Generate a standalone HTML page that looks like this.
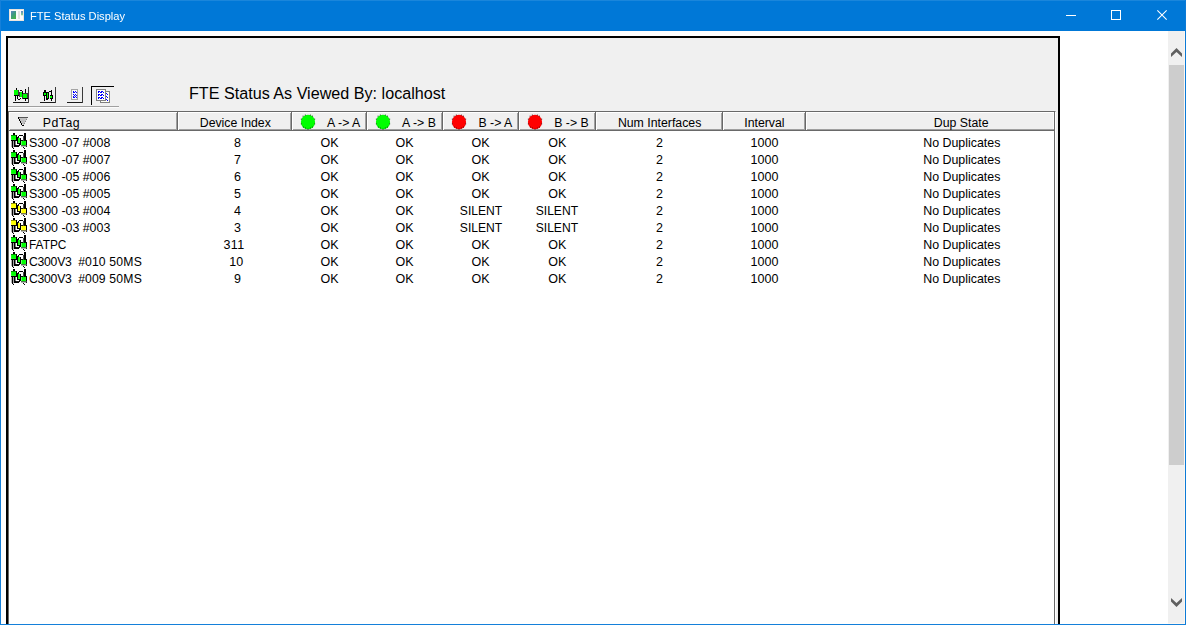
<!DOCTYPE html><html><head><meta charset="utf-8"><title>FTE Status Display</title><style>
*{margin:0;padding:0;box-sizing:border-box}
html,body{width:1186px;height:625px;overflow:hidden;background:#fff}
body{position:relative;font-family:"Liberation Sans",sans-serif;font-size:12px;color:#000}
.abs{position:absolute}
#title{left:0;top:0;width:1186px;height:31px;background:#0078d7}
#ttext{left:30px;top:8px;color:#fff;font-size:11.7px;line-height:15px;white-space:nowrap;transform-origin:0 0;transform:scaleX(0.95)}
#bl{left:0;top:0;width:1px;height:625px;background:#1580da}
#br{left:1185px;top:0;width:1px;height:625px;background:#0c7ad6}
#bb{left:0;top:624px;width:1186px;height:1px;background:#1480da}
#bt{left:0;top:0;width:1186px;height:1px;background:#1a86db}
#cr1{left:1184px;top:31px;width:1px;height:593px;background:#fdf7f1}
#cr2{left:1168px;top:623px;width:17px;height:1px;background:#fdf7f1}
#sb{left:1168px;top:31px;width:16px;height:592px;background:#f0f0f0}
#thumb{left:1169px;top:65px;width:15px;height:400px;background:#cdcdcd}
#frame{left:6px;top:36px;width:1054px;height:600px;border:2px solid #000;background:#f0f0f0}
#list{left:8px;top:111px;width:1048px;height:520px;background:#fff;border-left:1px solid #696969;border-top:1px solid #696969;border-right:1px solid #fff}
#lr{left:1054px;top:111px;width:1px;height:520px;background:#696969}
#hdr{left:9px;top:112px;width:1045px;height:19px;background:#f0f0f0}
.hc{position:absolute;top:112px;height:19px;border-top:1px solid #fff;border-left:1px solid #fff;border-right:1px solid #696969;border-bottom:1px solid #696969;background:#f0f0f0}
.hc i{position:absolute;left:0;top:0;right:0;bottom:0;border-right:1px solid #a0a0a0;border-bottom:1px solid #a0a0a0}
.ht{position:absolute;top:116px;font-size:12.3px;line-height:14px;white-space:nowrap;transform:translateX(-50%)}
.c{position:absolute;font-size:12.5px;line-height:14px;white-space:nowrap;transform:translateX(-50%)}
.n{position:absolute;left:29px;font-size:12.4px;line-height:14px;white-space:nowrap}
.ri{filter:blur(0.42px)}
.dot{position:absolute;width:15px;height:15px;border-radius:50%;top:113.5px}
#h1{left:189px;top:84px;font-size:16.15px;line-height:18px;white-space:nowrap}
</style></head><body>
<div class="abs" id="title"></div>
<div class="abs" id="ttext">FTE Status Display</div>
<div class="abs" id="sb"></div><div class="abs" id="thumb"></div>
<div class="abs" id="frame"></div>
<div class="abs" id="h1">FTE Status As Viewed By: localhost</div>
<div class="abs" id="list"></div><div class="abs" id="lr"></div>
<div class="abs" style="left:9px;top:112px;width:1046px;height:19px;background:#f0f0f0"></div>
<div class="abs" style="left:9px;top:112px;width:1046px;height:1px;background:#fff"></div>
<div class="abs" style="left:9px;top:129px;width:1046px;height:1px;background:#a0a0a0"></div>
<div class="abs" style="left:9px;top:130px;width:1046px;height:1px;background:#696969"></div>
<div class="abs" style="left:9px;top:112px;width:1px;height:18px;background:#fff"></div>
<div class="abs" style="left:176px;top:113px;width:1px;height:17px;background:#a0a0a0"></div>
<div class="abs" style="left:177px;top:112px;width:1px;height:19px;background:#696969"></div>
<div class="abs" style="left:178px;top:112px;width:1px;height:18px;background:#fff"></div>
<div class="abs" style="left:290px;top:113px;width:1px;height:17px;background:#a0a0a0"></div>
<div class="abs" style="left:291px;top:112px;width:1px;height:19px;background:#696969"></div>
<div class="abs" style="left:292px;top:112px;width:1px;height:18px;background:#fff"></div>
<div class="abs" style="left:365px;top:113px;width:1px;height:17px;background:#a0a0a0"></div>
<div class="abs" style="left:366px;top:112px;width:1px;height:19px;background:#696969"></div>
<div class="abs" style="left:367px;top:112px;width:1px;height:18px;background:#fff"></div>
<div class="abs" style="left:441px;top:113px;width:1px;height:17px;background:#a0a0a0"></div>
<div class="abs" style="left:442px;top:112px;width:1px;height:19px;background:#696969"></div>
<div class="abs" style="left:443px;top:112px;width:1px;height:18px;background:#fff"></div>
<div class="abs" style="left:517px;top:113px;width:1px;height:17px;background:#a0a0a0"></div>
<div class="abs" style="left:518px;top:112px;width:1px;height:19px;background:#696969"></div>
<div class="abs" style="left:519px;top:112px;width:1px;height:18px;background:#fff"></div>
<div class="abs" style="left:594px;top:113px;width:1px;height:17px;background:#a0a0a0"></div>
<div class="abs" style="left:595px;top:112px;width:1px;height:19px;background:#696969"></div>
<div class="abs" style="left:596px;top:112px;width:1px;height:18px;background:#fff"></div>
<div class="abs" style="left:721px;top:113px;width:1px;height:17px;background:#a0a0a0"></div>
<div class="abs" style="left:722px;top:112px;width:1px;height:19px;background:#696969"></div>
<div class="abs" style="left:723px;top:112px;width:1px;height:18px;background:#fff"></div>
<div class="abs" style="left:804px;top:113px;width:1px;height:17px;background:#a0a0a0"></div>
<div class="abs" style="left:805px;top:112px;width:1px;height:19px;background:#696969"></div>
<div class="abs" style="left:806px;top:112px;width:1px;height:18px;background:#fff"></div>
<div class="abs" style="left:1053px;top:113px;width:1px;height:16px;background:#f9f9f9"></div>
<div class="abs" style="left:1054px;top:112px;width:1px;height:19px;background:#696969"></div>
<div class="ht" style="left:61.4px"><span style="letter-spacing:0.5px">PdTag</span></div>
<div class="ht" style="left:235.3px">Device Index</div>
<div class="ht" style="left:343.7px">A -&gt; A</div>
<div class="ht" style="left:419px">A -&gt; B</div>
<div class="ht" style="left:495.4px">B -&gt; A</div>
<div class="ht" style="left:571.5px">B -&gt; B</div>
<div class="ht" style="left:659.6px">Num Interfaces</div>
<div class="ht" style="left:764.4px">Interval</div>
<div class="ht" style="left:961.2px">Dup State</div>
<svg class="abs" style="left:299.05px;top:112.8px;" width="18" height="18" viewBox="0 0 18 18"><ellipse cx="9" cy="9" rx="7.1" ry="7.3" fill="#00ff00"/><rect x="3.55" y="2.65" width="1" height="1" fill="#063c06" opacity="0.85"/><rect x="5.85" y="1.55" width="1" height="1" fill="#063c06" opacity="0.85"/><rect x="10.85" y="1.55" width="1" height="1" fill="#063c06" opacity="0.85"/><rect x="12.95" y="2.65" width="1" height="1" fill="#063c06" opacity="0.85"/><rect x="1.85" y="5.65" width="1" height="1" fill="#063c06" opacity="0.85"/><rect x="15.15" y="5.65" width="1" height="1" fill="#063c06" opacity="0.85"/><rect x="1.85" y="10.35" width="1" height="1" fill="#063c06" opacity="0.85"/><rect x="15.15" y="10.35" width="1" height="1" fill="#063c06" opacity="0.85"/><rect x="3.85" y="13.55" width="1" height="1" fill="#063c06" opacity="0.85"/><rect x="12.95" y="13.55" width="1" height="1" fill="#063c06" opacity="0.85"/><rect x="5.95" y="14.55" width="1" height="1" fill="#063c06" opacity="0.85"/><rect x="10.85" y="14.55" width="1" height="1" fill="#063c06" opacity="0.85"/><rect x="8.50" y="15.65" width="1" height="1" fill="#063c06" opacity="0.85"/></svg>
<svg class="abs" style="left:374.0px;top:112.8px;" width="18" height="18" viewBox="0 0 18 18"><ellipse cx="9" cy="9" rx="7.1" ry="7.3" fill="#00ff00"/><rect x="3.55" y="2.65" width="1" height="1" fill="#063c06" opacity="0.85"/><rect x="5.85" y="1.55" width="1" height="1" fill="#063c06" opacity="0.85"/><rect x="10.85" y="1.55" width="1" height="1" fill="#063c06" opacity="0.85"/><rect x="12.95" y="2.65" width="1" height="1" fill="#063c06" opacity="0.85"/><rect x="1.85" y="5.65" width="1" height="1" fill="#063c06" opacity="0.85"/><rect x="15.15" y="5.65" width="1" height="1" fill="#063c06" opacity="0.85"/><rect x="1.85" y="10.35" width="1" height="1" fill="#063c06" opacity="0.85"/><rect x="15.15" y="10.35" width="1" height="1" fill="#063c06" opacity="0.85"/><rect x="3.85" y="13.55" width="1" height="1" fill="#063c06" opacity="0.85"/><rect x="12.95" y="13.55" width="1" height="1" fill="#063c06" opacity="0.85"/><rect x="5.95" y="14.55" width="1" height="1" fill="#063c06" opacity="0.85"/><rect x="10.85" y="14.55" width="1" height="1" fill="#063c06" opacity="0.85"/><rect x="8.50" y="15.65" width="1" height="1" fill="#063c06" opacity="0.85"/></svg>
<svg class="abs" style="left:450.0px;top:112.8px;" width="18" height="18" viewBox="0 0 18 18"><ellipse cx="9" cy="9" rx="7.1" ry="7.3" fill="#ff0000"/><rect x="3.55" y="2.65" width="1" height="1" fill="#4a0505" opacity="0.85"/><rect x="5.85" y="1.55" width="1" height="1" fill="#4a0505" opacity="0.85"/><rect x="10.85" y="1.55" width="1" height="1" fill="#4a0505" opacity="0.85"/><rect x="12.95" y="2.65" width="1" height="1" fill="#4a0505" opacity="0.85"/><rect x="1.85" y="5.65" width="1" height="1" fill="#4a0505" opacity="0.85"/><rect x="15.15" y="5.65" width="1" height="1" fill="#4a0505" opacity="0.85"/><rect x="1.85" y="10.35" width="1" height="1" fill="#4a0505" opacity="0.85"/><rect x="15.15" y="10.35" width="1" height="1" fill="#4a0505" opacity="0.85"/><rect x="3.85" y="13.55" width="1" height="1" fill="#4a0505" opacity="0.85"/><rect x="12.95" y="13.55" width="1" height="1" fill="#4a0505" opacity="0.85"/><rect x="5.95" y="14.55" width="1" height="1" fill="#4a0505" opacity="0.85"/><rect x="10.85" y="14.55" width="1" height="1" fill="#4a0505" opacity="0.85"/><rect x="8.50" y="15.65" width="1" height="1" fill="#4a0505" opacity="0.85"/></svg>
<svg class="abs" style="left:526.05px;top:112.8px;" width="18" height="18" viewBox="0 0 18 18"><ellipse cx="9" cy="9" rx="7.1" ry="7.3" fill="#ff0000"/><rect x="3.55" y="2.65" width="1" height="1" fill="#4a0505" opacity="0.85"/><rect x="5.85" y="1.55" width="1" height="1" fill="#4a0505" opacity="0.85"/><rect x="10.85" y="1.55" width="1" height="1" fill="#4a0505" opacity="0.85"/><rect x="12.95" y="2.65" width="1" height="1" fill="#4a0505" opacity="0.85"/><rect x="1.85" y="5.65" width="1" height="1" fill="#4a0505" opacity="0.85"/><rect x="15.15" y="5.65" width="1" height="1" fill="#4a0505" opacity="0.85"/><rect x="1.85" y="10.35" width="1" height="1" fill="#4a0505" opacity="0.85"/><rect x="15.15" y="10.35" width="1" height="1" fill="#4a0505" opacity="0.85"/><rect x="3.85" y="13.55" width="1" height="1" fill="#4a0505" opacity="0.85"/><rect x="12.95" y="13.55" width="1" height="1" fill="#4a0505" opacity="0.85"/><rect x="5.95" y="14.55" width="1" height="1" fill="#4a0505" opacity="0.85"/><rect x="10.85" y="14.55" width="1" height="1" fill="#4a0505" opacity="0.85"/><rect x="8.50" y="15.65" width="1" height="1" fill="#4a0505" opacity="0.85"/></svg>
<svg class="abs ri" style="left:10px;top:132px" width="18" height="18" viewBox="0 0 18 18"><rect x="3" y="1" width="2" height="2" fill="#000"/><rect x="14" y="1" width="2" height="8" fill="#000"/><rect x="9" y="3" width="4" height="1" fill="#000"/><rect x="8" y="4" width="1" height="2" fill="#000"/><rect x="6" y="3" width="1" height="6" fill="#000"/><rect x="1" y="8" width="6" height="1" fill="#000"/><rect x="2" y="9" width="1" height="7" fill="#000"/><rect x="4" y="9" width="1" height="6" fill="#000"/><rect x="3" y="16" width="1" height="1" fill="#000"/><rect x="5" y="14" width="4" height="1" fill="#000"/><rect x="9" y="13" width="1" height="1" fill="#000"/><rect x="7" y="5" width="1" height="7" fill="#000"/><rect x="10" y="6" width="1" height="7" fill="#000"/><rect x="8" y="11" width="2" height="1" fill="#000"/><rect x="9" y="12" width="1" height="1" fill="#000"/><rect x="5" y="13" width="1" height="1" fill="#000"/><rect x="11" y="8" width="6" height="1" fill="#000"/><rect x="16" y="9" width="1" height="6" fill="#000"/><rect x="13" y="15" width="1" height="1" fill="#000"/><rect x="14" y="16" width="1" height="1" fill="#000"/><rect x="1" y="3" width="5" height="1" fill="#000"/><rect x="13" y="4" width="1" height="5" fill="#4a4a4a"/><rect x="1.0999999999999996" y="3.4499999999999886" width="4.9" height="4.45" fill="#00ff00"/><rect x="8" y="5.900000000000006" width="1.9" height="5" fill="#00ff00"/><rect x="11" y="13.099999999999994" width="6" height="1.3" fill="#4a4a4a"/><rect x="11.399999999999999" y="8.900000000000006" width="4.5" height="4.3" fill="#00ff00"/><rect x="2.9000000000000004" y="9" width="0.45" height="6.5" fill="#000"/><rect x="5" y="9" width="0.5" height="5" fill="#000"/><rect x="5" y="13.099999999999994" width="4.6" height="1" fill="#000"/><rect x="1.6999999999999993" y="9" width="0.4" height="6" fill="#000"/></svg>
<div class="n" style="top:136px">S300 -07 #008</div>
<div class="c" style="top:136px;left:237.5px">8</div>
<div class="c" style="top:136px;left:329.6px">OK</div>
<div class="c" style="top:136px;left:404.6px">OK</div>
<div class="c" style="top:136px;left:480.6px">OK</div>
<div class="c" style="top:136px;left:557.2px">OK</div>
<div class="c" style="top:136px;left:659.5px">2</div>
<div class="c" style="top:136px;left:764.5px">1000</div>
<div class="c" style="top:136px;left:961.8px;font-size:12.4px">No Duplicates</div>
<svg class="abs ri" style="left:10px;top:149px" width="18" height="18" viewBox="0 0 18 18"><rect x="3" y="1" width="2" height="2" fill="#000"/><rect x="14" y="1" width="2" height="8" fill="#000"/><rect x="9" y="3" width="4" height="1" fill="#000"/><rect x="8" y="4" width="1" height="2" fill="#000"/><rect x="6" y="3" width="1" height="6" fill="#000"/><rect x="1" y="8" width="6" height="1" fill="#000"/><rect x="2" y="9" width="1" height="7" fill="#000"/><rect x="4" y="9" width="1" height="6" fill="#000"/><rect x="3" y="16" width="1" height="1" fill="#000"/><rect x="5" y="14" width="4" height="1" fill="#000"/><rect x="9" y="13" width="1" height="1" fill="#000"/><rect x="7" y="5" width="1" height="7" fill="#000"/><rect x="10" y="6" width="1" height="7" fill="#000"/><rect x="8" y="11" width="2" height="1" fill="#000"/><rect x="9" y="12" width="1" height="1" fill="#000"/><rect x="5" y="13" width="1" height="1" fill="#000"/><rect x="11" y="8" width="6" height="1" fill="#000"/><rect x="16" y="9" width="1" height="6" fill="#000"/><rect x="13" y="15" width="1" height="1" fill="#000"/><rect x="14" y="16" width="1" height="1" fill="#000"/><rect x="1" y="3" width="5" height="1" fill="#000"/><rect x="13" y="4" width="1" height="5" fill="#4a4a4a"/><rect x="1.0999999999999996" y="3.4499999999999886" width="4.9" height="4.45" fill="#00ff00"/><rect x="8" y="5.900000000000006" width="1.9" height="5" fill="#00ff00"/><rect x="11" y="13.099999999999994" width="6" height="1.3" fill="#4a4a4a"/><rect x="11.399999999999999" y="8.900000000000006" width="4.5" height="4.3" fill="#00ff00"/><rect x="2.9000000000000004" y="9" width="0.45" height="6.5" fill="#000"/><rect x="5" y="9" width="0.5" height="5" fill="#000"/><rect x="5" y="13.099999999999994" width="4.6" height="1" fill="#000"/><rect x="1.6999999999999993" y="9" width="0.4" height="6" fill="#000"/></svg>
<div class="n" style="top:153px">S300 -07 #007</div>
<div class="c" style="top:153px;left:237.5px">7</div>
<div class="c" style="top:153px;left:329.6px">OK</div>
<div class="c" style="top:153px;left:404.6px">OK</div>
<div class="c" style="top:153px;left:480.6px">OK</div>
<div class="c" style="top:153px;left:557.2px">OK</div>
<div class="c" style="top:153px;left:659.5px">2</div>
<div class="c" style="top:153px;left:764.5px">1000</div>
<div class="c" style="top:153px;left:961.8px;font-size:12.4px">No Duplicates</div>
<svg class="abs ri" style="left:10px;top:166px" width="18" height="18" viewBox="0 0 18 18"><rect x="3" y="1" width="2" height="2" fill="#000"/><rect x="14" y="1" width="2" height="8" fill="#000"/><rect x="9" y="3" width="4" height="1" fill="#000"/><rect x="8" y="4" width="1" height="2" fill="#000"/><rect x="6" y="3" width="1" height="6" fill="#000"/><rect x="1" y="8" width="6" height="1" fill="#000"/><rect x="2" y="9" width="1" height="7" fill="#000"/><rect x="4" y="9" width="1" height="6" fill="#000"/><rect x="3" y="16" width="1" height="1" fill="#000"/><rect x="5" y="14" width="4" height="1" fill="#000"/><rect x="9" y="13" width="1" height="1" fill="#000"/><rect x="7" y="5" width="1" height="7" fill="#000"/><rect x="10" y="6" width="1" height="7" fill="#000"/><rect x="8" y="11" width="2" height="1" fill="#000"/><rect x="9" y="12" width="1" height="1" fill="#000"/><rect x="5" y="13" width="1" height="1" fill="#000"/><rect x="11" y="8" width="6" height="1" fill="#000"/><rect x="16" y="9" width="1" height="6" fill="#000"/><rect x="13" y="15" width="1" height="1" fill="#000"/><rect x="14" y="16" width="1" height="1" fill="#000"/><rect x="1" y="3" width="5" height="1" fill="#000"/><rect x="13" y="4" width="1" height="5" fill="#4a4a4a"/><rect x="1.0999999999999996" y="3.4499999999999886" width="4.9" height="4.45" fill="#00ff00"/><rect x="8" y="5.900000000000006" width="1.9" height="5" fill="#00ff00"/><rect x="11" y="13.099999999999994" width="6" height="1.3" fill="#4a4a4a"/><rect x="11.399999999999999" y="8.900000000000006" width="4.5" height="4.3" fill="#00ff00"/><rect x="2.9000000000000004" y="9" width="0.45" height="6.5" fill="#000"/><rect x="5" y="9" width="0.5" height="5" fill="#000"/><rect x="5" y="13.099999999999994" width="4.6" height="1" fill="#000"/><rect x="1.6999999999999993" y="9" width="0.4" height="6" fill="#000"/></svg>
<div class="n" style="top:170px">S300 -05 #006</div>
<div class="c" style="top:170px;left:237.5px">6</div>
<div class="c" style="top:170px;left:329.6px">OK</div>
<div class="c" style="top:170px;left:404.6px">OK</div>
<div class="c" style="top:170px;left:480.6px">OK</div>
<div class="c" style="top:170px;left:557.2px">OK</div>
<div class="c" style="top:170px;left:659.5px">2</div>
<div class="c" style="top:170px;left:764.5px">1000</div>
<div class="c" style="top:170px;left:961.8px;font-size:12.4px">No Duplicates</div>
<svg class="abs ri" style="left:10px;top:183px" width="18" height="18" viewBox="0 0 18 18"><rect x="3" y="1" width="2" height="2" fill="#000"/><rect x="14" y="1" width="2" height="8" fill="#000"/><rect x="9" y="3" width="4" height="1" fill="#000"/><rect x="8" y="4" width="1" height="2" fill="#000"/><rect x="6" y="3" width="1" height="6" fill="#000"/><rect x="1" y="8" width="6" height="1" fill="#000"/><rect x="2" y="9" width="1" height="7" fill="#000"/><rect x="4" y="9" width="1" height="6" fill="#000"/><rect x="3" y="16" width="1" height="1" fill="#000"/><rect x="5" y="14" width="4" height="1" fill="#000"/><rect x="9" y="13" width="1" height="1" fill="#000"/><rect x="7" y="5" width="1" height="7" fill="#000"/><rect x="10" y="6" width="1" height="7" fill="#000"/><rect x="8" y="11" width="2" height="1" fill="#000"/><rect x="9" y="12" width="1" height="1" fill="#000"/><rect x="5" y="13" width="1" height="1" fill="#000"/><rect x="11" y="8" width="6" height="1" fill="#000"/><rect x="16" y="9" width="1" height="6" fill="#000"/><rect x="13" y="15" width="1" height="1" fill="#000"/><rect x="14" y="16" width="1" height="1" fill="#000"/><rect x="1" y="3" width="5" height="1" fill="#000"/><rect x="13" y="4" width="1" height="5" fill="#4a4a4a"/><rect x="1.0999999999999996" y="3.4499999999999886" width="4.9" height="4.45" fill="#00ff00"/><rect x="8" y="5.900000000000006" width="1.9" height="5" fill="#00ff00"/><rect x="11" y="13.099999999999994" width="6" height="1.3" fill="#4a4a4a"/><rect x="11.399999999999999" y="8.900000000000006" width="4.5" height="4.3" fill="#00ff00"/><rect x="2.9000000000000004" y="9" width="0.45" height="6.5" fill="#000"/><rect x="5" y="9" width="0.5" height="5" fill="#000"/><rect x="5" y="13.099999999999994" width="4.6" height="1" fill="#000"/><rect x="1.6999999999999993" y="9" width="0.4" height="6" fill="#000"/></svg>
<div class="n" style="top:187px">S300 -05 #005</div>
<div class="c" style="top:187px;left:237.5px">5</div>
<div class="c" style="top:187px;left:329.6px">OK</div>
<div class="c" style="top:187px;left:404.6px">OK</div>
<div class="c" style="top:187px;left:480.6px">OK</div>
<div class="c" style="top:187px;left:557.2px">OK</div>
<div class="c" style="top:187px;left:659.5px">2</div>
<div class="c" style="top:187px;left:764.5px">1000</div>
<div class="c" style="top:187px;left:961.8px;font-size:12.4px">No Duplicates</div>
<svg class="abs ri" style="left:10px;top:200px" width="18" height="18" viewBox="0 0 18 18"><rect x="3" y="1" width="2" height="2" fill="#000"/><rect x="14" y="1" width="2" height="8" fill="#000"/><rect x="9" y="3" width="4" height="1" fill="#000"/><rect x="8" y="4" width="1" height="2" fill="#000"/><rect x="6" y="3" width="1" height="6" fill="#000"/><rect x="1" y="8" width="6" height="1" fill="#000"/><rect x="2" y="9" width="1" height="7" fill="#000"/><rect x="4" y="9" width="1" height="6" fill="#000"/><rect x="3" y="16" width="1" height="1" fill="#000"/><rect x="5" y="14" width="4" height="1" fill="#000"/><rect x="9" y="13" width="1" height="1" fill="#000"/><rect x="7" y="5" width="1" height="7" fill="#000"/><rect x="10" y="6" width="1" height="7" fill="#000"/><rect x="8" y="11" width="2" height="1" fill="#000"/><rect x="9" y="12" width="1" height="1" fill="#000"/><rect x="5" y="13" width="1" height="1" fill="#000"/><rect x="11" y="8" width="6" height="1" fill="#000"/><rect x="16" y="9" width="1" height="6" fill="#000"/><rect x="13" y="15" width="1" height="1" fill="#000"/><rect x="14" y="16" width="1" height="1" fill="#000"/><rect x="1" y="3" width="5" height="1" fill="#000"/><rect x="13" y="4" width="1" height="5" fill="#4a4a4a"/><rect x="1.0999999999999996" y="3.4499999999999886" width="4.9" height="4.45" fill="#ffff00"/><rect x="8" y="5.900000000000006" width="1.9" height="5" fill="#ffff00"/><rect x="11" y="13.099999999999994" width="6" height="1.3" fill="#4a4a4a"/><rect x="11.399999999999999" y="8.900000000000006" width="4.5" height="4.3" fill="#ffff00"/><rect x="2.9000000000000004" y="9" width="0.45" height="6.5" fill="#000"/><rect x="5" y="9" width="0.5" height="5" fill="#000"/><rect x="5" y="13.099999999999994" width="4.6" height="1" fill="#000"/><rect x="1.6999999999999993" y="9" width="0.4" height="6" fill="#000"/></svg>
<div class="n" style="top:204px">S300 -03 #004</div>
<div class="c" style="top:204px;left:237.5px">4</div>
<div class="c" style="top:204px;left:329.6px">OK</div>
<div class="c" style="top:204px;left:404.6px">OK</div>
<div class="c" style="top:204px;left:481.0px;font-size:12.1px">SILENT</div>
<div class="c" style="top:204px;left:556.9000000000001px;font-size:12.1px">SILENT</div>
<div class="c" style="top:204px;left:659.5px">2</div>
<div class="c" style="top:204px;left:764.5px">1000</div>
<div class="c" style="top:204px;left:961.8px;font-size:12.4px">No Duplicates</div>
<svg class="abs ri" style="left:10px;top:217px" width="18" height="18" viewBox="0 0 18 18"><rect x="3" y="1" width="2" height="2" fill="#000"/><rect x="14" y="1" width="2" height="8" fill="#000"/><rect x="9" y="3" width="4" height="1" fill="#000"/><rect x="8" y="4" width="1" height="2" fill="#000"/><rect x="6" y="3" width="1" height="6" fill="#000"/><rect x="1" y="8" width="6" height="1" fill="#000"/><rect x="2" y="9" width="1" height="7" fill="#000"/><rect x="4" y="9" width="1" height="6" fill="#000"/><rect x="3" y="16" width="1" height="1" fill="#000"/><rect x="5" y="14" width="4" height="1" fill="#000"/><rect x="9" y="13" width="1" height="1" fill="#000"/><rect x="7" y="5" width="1" height="7" fill="#000"/><rect x="10" y="6" width="1" height="7" fill="#000"/><rect x="8" y="11" width="2" height="1" fill="#000"/><rect x="9" y="12" width="1" height="1" fill="#000"/><rect x="5" y="13" width="1" height="1" fill="#000"/><rect x="11" y="8" width="6" height="1" fill="#000"/><rect x="16" y="9" width="1" height="6" fill="#000"/><rect x="13" y="15" width="1" height="1" fill="#000"/><rect x="14" y="16" width="1" height="1" fill="#000"/><rect x="1" y="3" width="5" height="1" fill="#000"/><rect x="13" y="4" width="1" height="5" fill="#4a4a4a"/><rect x="1.0999999999999996" y="3.4499999999999886" width="4.9" height="4.45" fill="#ffff00"/><rect x="8" y="5.900000000000006" width="1.9" height="5" fill="#ffff00"/><rect x="11" y="13.099999999999994" width="6" height="1.3" fill="#4a4a4a"/><rect x="11.399999999999999" y="8.900000000000006" width="4.5" height="4.3" fill="#ffff00"/><rect x="2.9000000000000004" y="9" width="0.45" height="6.5" fill="#000"/><rect x="5" y="9" width="0.5" height="5" fill="#000"/><rect x="5" y="13.099999999999994" width="4.6" height="1" fill="#000"/><rect x="1.6999999999999993" y="9" width="0.4" height="6" fill="#000"/></svg>
<div class="n" style="top:221px">S300 -03 #003</div>
<div class="c" style="top:221px;left:237.5px">3</div>
<div class="c" style="top:221px;left:329.6px">OK</div>
<div class="c" style="top:221px;left:404.6px">OK</div>
<div class="c" style="top:221px;left:481.0px;font-size:12.1px">SILENT</div>
<div class="c" style="top:221px;left:556.9000000000001px;font-size:12.1px">SILENT</div>
<div class="c" style="top:221px;left:659.5px">2</div>
<div class="c" style="top:221px;left:764.5px">1000</div>
<div class="c" style="top:221px;left:961.8px;font-size:12.4px">No Duplicates</div>
<svg class="abs ri" style="left:10px;top:234px" width="18" height="18" viewBox="0 0 18 18"><rect x="3" y="1" width="2" height="2" fill="#000"/><rect x="14" y="1" width="2" height="8" fill="#000"/><rect x="9" y="3" width="4" height="1" fill="#000"/><rect x="8" y="4" width="1" height="2" fill="#000"/><rect x="6" y="3" width="1" height="6" fill="#000"/><rect x="1" y="8" width="6" height="1" fill="#000"/><rect x="2" y="9" width="1" height="7" fill="#000"/><rect x="4" y="9" width="1" height="6" fill="#000"/><rect x="3" y="16" width="1" height="1" fill="#000"/><rect x="5" y="14" width="4" height="1" fill="#000"/><rect x="9" y="13" width="1" height="1" fill="#000"/><rect x="7" y="5" width="1" height="7" fill="#000"/><rect x="10" y="6" width="1" height="7" fill="#000"/><rect x="8" y="11" width="2" height="1" fill="#000"/><rect x="9" y="12" width="1" height="1" fill="#000"/><rect x="5" y="13" width="1" height="1" fill="#000"/><rect x="11" y="8" width="6" height="1" fill="#000"/><rect x="16" y="9" width="1" height="6" fill="#000"/><rect x="13" y="15" width="1" height="1" fill="#000"/><rect x="14" y="16" width="1" height="1" fill="#000"/><rect x="1" y="3" width="5" height="1" fill="#000"/><rect x="13" y="4" width="1" height="5" fill="#4a4a4a"/><rect x="1.0999999999999996" y="3.4499999999999886" width="4.9" height="4.45" fill="#00ff00"/><rect x="8" y="5.900000000000006" width="1.9" height="5" fill="#00ff00"/><rect x="11" y="13.099999999999994" width="6" height="1.3" fill="#4a4a4a"/><rect x="11.399999999999999" y="8.900000000000006" width="4.5" height="4.3" fill="#00ff00"/><rect x="2.9000000000000004" y="9" width="0.45" height="6.5" fill="#000"/><rect x="5" y="9" width="0.5" height="5" fill="#000"/><rect x="5" y="13.099999999999994" width="4.6" height="1" fill="#000"/><rect x="1.6999999999999993" y="9" width="0.4" height="6" fill="#000"/></svg>
<div class="n" style="top:238px;font-size:11.9px">FATPC</div>
<div class="c" style="top:238px;left:234.1px;letter-spacing:0.5px">311</div>
<div class="c" style="top:238px;left:329.6px">OK</div>
<div class="c" style="top:238px;left:404.6px">OK</div>
<div class="c" style="top:238px;left:480.6px">OK</div>
<div class="c" style="top:238px;left:557.2px">OK</div>
<div class="c" style="top:238px;left:659.5px">2</div>
<div class="c" style="top:238px;left:764.5px">1000</div>
<div class="c" style="top:238px;left:961.8px;font-size:12.4px">No Duplicates</div>
<svg class="abs ri" style="left:10px;top:251px" width="18" height="18" viewBox="0 0 18 18"><rect x="3" y="1" width="2" height="2" fill="#000"/><rect x="14" y="1" width="2" height="8" fill="#000"/><rect x="9" y="3" width="4" height="1" fill="#000"/><rect x="8" y="4" width="1" height="2" fill="#000"/><rect x="6" y="3" width="1" height="6" fill="#000"/><rect x="1" y="8" width="6" height="1" fill="#000"/><rect x="2" y="9" width="1" height="7" fill="#000"/><rect x="4" y="9" width="1" height="6" fill="#000"/><rect x="3" y="16" width="1" height="1" fill="#000"/><rect x="5" y="14" width="4" height="1" fill="#000"/><rect x="9" y="13" width="1" height="1" fill="#000"/><rect x="7" y="5" width="1" height="7" fill="#000"/><rect x="10" y="6" width="1" height="7" fill="#000"/><rect x="8" y="11" width="2" height="1" fill="#000"/><rect x="9" y="12" width="1" height="1" fill="#000"/><rect x="5" y="13" width="1" height="1" fill="#000"/><rect x="11" y="8" width="6" height="1" fill="#000"/><rect x="16" y="9" width="1" height="6" fill="#000"/><rect x="13" y="15" width="1" height="1" fill="#000"/><rect x="14" y="16" width="1" height="1" fill="#000"/><rect x="1" y="3" width="5" height="1" fill="#000"/><rect x="13" y="4" width="1" height="5" fill="#4a4a4a"/><rect x="1.0999999999999996" y="3.4499999999999886" width="4.9" height="4.45" fill="#00ff00"/><rect x="8" y="5.900000000000006" width="1.9" height="5" fill="#00ff00"/><rect x="11" y="13.099999999999994" width="6" height="1.3" fill="#4a4a4a"/><rect x="11.399999999999999" y="8.900000000000006" width="4.5" height="4.3" fill="#00ff00"/><rect x="2.9000000000000004" y="9" width="0.45" height="6.5" fill="#000"/><rect x="5" y="9" width="0.5" height="5" fill="#000"/><rect x="5" y="13.099999999999994" width="4.6" height="1" fill="#000"/><rect x="1.6999999999999993" y="9" width="0.4" height="6" fill="#000"/></svg>
<div class="n" style="top:255px;font-size:12.2px"><span style="letter-spacing:-0.25px">C300V3</span>&nbsp; #010 <span style="letter-spacing:0.3px;margin-left:0.4px">50MS</span></div>
<div class="c" style="top:255px;left:236.2px">10</div>
<div class="c" style="top:255px;left:329.6px">OK</div>
<div class="c" style="top:255px;left:404.6px">OK</div>
<div class="c" style="top:255px;left:480.6px">OK</div>
<div class="c" style="top:255px;left:557.2px">OK</div>
<div class="c" style="top:255px;left:659.5px">2</div>
<div class="c" style="top:255px;left:764.5px">1000</div>
<div class="c" style="top:255px;left:961.8px;font-size:12.4px">No Duplicates</div>
<svg class="abs ri" style="left:10px;top:268px" width="18" height="18" viewBox="0 0 18 18"><rect x="3" y="1" width="2" height="2" fill="#000"/><rect x="14" y="1" width="2" height="8" fill="#000"/><rect x="9" y="3" width="4" height="1" fill="#000"/><rect x="8" y="4" width="1" height="2" fill="#000"/><rect x="6" y="3" width="1" height="6" fill="#000"/><rect x="1" y="8" width="6" height="1" fill="#000"/><rect x="2" y="9" width="1" height="7" fill="#000"/><rect x="4" y="9" width="1" height="6" fill="#000"/><rect x="3" y="16" width="1" height="1" fill="#000"/><rect x="5" y="14" width="4" height="1" fill="#000"/><rect x="9" y="13" width="1" height="1" fill="#000"/><rect x="7" y="5" width="1" height="7" fill="#000"/><rect x="10" y="6" width="1" height="7" fill="#000"/><rect x="8" y="11" width="2" height="1" fill="#000"/><rect x="9" y="12" width="1" height="1" fill="#000"/><rect x="5" y="13" width="1" height="1" fill="#000"/><rect x="11" y="8" width="6" height="1" fill="#000"/><rect x="16" y="9" width="1" height="6" fill="#000"/><rect x="13" y="15" width="1" height="1" fill="#000"/><rect x="14" y="16" width="1" height="1" fill="#000"/><rect x="1" y="3" width="5" height="1" fill="#000"/><rect x="13" y="4" width="1" height="5" fill="#4a4a4a"/><rect x="1.0999999999999996" y="3.4499999999999886" width="4.9" height="4.45" fill="#00ff00"/><rect x="8" y="5.900000000000006" width="1.9" height="5" fill="#00ff00"/><rect x="11" y="13.099999999999994" width="6" height="1.3" fill="#4a4a4a"/><rect x="11.399999999999999" y="8.900000000000006" width="4.5" height="4.3" fill="#00ff00"/><rect x="2.9000000000000004" y="9" width="0.45" height="6.5" fill="#000"/><rect x="5" y="9" width="0.5" height="5" fill="#000"/><rect x="5" y="13.099999999999994" width="4.6" height="1" fill="#000"/><rect x="1.6999999999999993" y="9" width="0.4" height="6" fill="#000"/></svg>
<div class="n" style="top:272px;font-size:12.2px"><span style="letter-spacing:-0.25px">C300V3</span>&nbsp; #009 <span style="letter-spacing:0.3px;margin-left:0.4px">50MS</span></div>
<div class="c" style="top:272px;left:237.5px">9</div>
<div class="c" style="top:272px;left:329.6px">OK</div>
<div class="c" style="top:272px;left:404.6px">OK</div>
<div class="c" style="top:272px;left:480.6px">OK</div>
<div class="c" style="top:272px;left:557.2px">OK</div>
<div class="c" style="top:272px;left:659.5px">2</div>
<div class="c" style="top:272px;left:764.5px">1000</div>
<div class="c" style="top:272px;left:961.8px;font-size:12.4px">No Duplicates</div>
<div class="abs" style="left:8px;top:106px;width:111px;height:1px;background:#a0a0a0"></div><div class="abs" style="left:8px;top:107px;width:111px;height:1px;background:#fbfbfb"></div><div class="abs" style="left:13px;top:102px;width:16px;height:1px;background:#1a1a1a"></div><div class="abs" style="left:28px;top:87px;width:1px;height:16px;background:#3a3a3a"></div><div class="abs" style="left:40px;top:102px;width:16px;height:1px;background:#1a1a1a"></div><div class="abs" style="left:55px;top:87px;width:1px;height:16px;background:#3a3a3a"></div><div class="abs" style="left:67px;top:102px;width:16px;height:1px;background:#1a1a1a"></div><div class="abs" style="left:82px;top:87px;width:1px;height:16px;background:#3a3a3a"></div><div class="abs" style="left:91px;top:86px;width:23px;height:1px;background:#000"></div><div class="abs" style="left:91px;top:86px;width:1px;height:19px;background:#000"></div><svg class="abs" style="left:13px;top:87px;filter:blur(0.4px)" width="16" height="16" viewBox="0 0 16 16" shape-rendering="crispEdges"><rect x="3" y="1" width="1" height="2" fill="#000"/><rect x="12" y="2" width="1" height="5" fill="#000"/><rect x="1" y="8" width="5" height="1" fill="#000"/><rect x="2" y="9" width="1" height="5" fill="#000"/><rect x="4" y="9" width="1" height="3" fill="#000"/><rect x="5" y="12" width="2" height="1" fill="#000"/><rect x="7" y="11" width="1" height="1" fill="#000"/><rect x="9" y="4" width="1" height="7" fill="#000"/><rect x="7" y="3" width="2" height="1" fill="#000"/><rect x="10" y="11" width="5" height="1" fill="#000"/><rect x="12" y="12" width="1" height="2" fill="#000"/><rect x="5" y="3" width="1" height="5" fill="#3c3c3c"/><rect x="6" y="5" width="1" height="5" fill="#3c3c3c"/><rect x="10" y="6" width="5" height="1" fill="#3c3c3c"/><rect x="14" y="7" width="1" height="4" fill="#3c3c3c"/><rect x="9" y="7" width="1" height="5" fill="#3c3c3c"/><rect x="1" y="3" width="4" height="5" fill="#00ff00"/><rect x="7" y="5" width="2" height="5" fill="#00ff00"/><rect x="10" y="7" width="4" height="4" fill="#00ff00"/></svg><svg class="abs" style="left:40px;top:87px;filter:blur(0.4px)" width="16" height="16" viewBox="0 0 16 16" shape-rendering="crispEdges"><rect x="4" y="3" width="2" height="2" fill="#000"/><rect x="3" y="5" width="4" height="4" fill="#000"/><rect x="4" y="9" width="1" height="5" fill="#000"/><rect x="6" y="9" width="1" height="3" fill="#000"/><rect x="6" y="12" width="2" height="1" fill="#000"/><rect x="7" y="5" width="2" height="7" fill="#000"/><rect x="9" y="4" width="2" height="1" fill="#000"/><rect x="11" y="3" width="1" height="5" fill="#000"/><rect x="10" y="8" width="3" height="4" fill="#000"/><rect x="11" y="12" width="1" height="2" fill="#000"/><rect x="4" y="6" width="2" height="2" fill="#00ff00"/><rect x="7" y="6" width="1" height="5" fill="#00ff00"/><rect x="10" y="9" width="2" height="2" fill="#00ff00"/></svg><svg class="abs" style="left:67px;top:87px;filter:blur(0.35px)" width="16" height="16" viewBox="0 0 16 16" shape-rendering="crispEdges"><rect x="4.5" y="2.9" width="6" height="9.6" fill="#fbfbf4" stroke="#a4a4a4"/><rect x="6" y="4" width="1" height="1" fill="#0000ff"/><rect x="8" y="4" width="1" height="1" fill="#0000ff"/><rect x="6" y="5" width="2" height="1" fill="#0000ff"/><rect x="9" y="5" width="1" height="1" fill="#0000ff"/><rect x="6" y="7" width="1" height="1" fill="#0000ff"/><rect x="8" y="7" width="1" height="1" fill="#0000ff"/><rect x="7" y="8" width="1" height="1" fill="#0000ff"/><rect x="9" y="8" width="1" height="1" fill="#0000ff"/><rect x="6" y="9" width="1" height="1" fill="#0000ff"/><rect x="8" y="9" width="1" height="1" fill="#0000ff"/><rect x="6" y="10" width="2" height="1" fill="#0000ff"/><rect x="9" y="10" width="1" height="1" fill="#0000ff"/></svg><svg class="abs" style="left:94px;top:87px;filter:blur(0.25px)" width="18" height="18" viewBox="0 0 18 18" shape-rendering="crispEdges"><rect x="6.5" y="4.5" width="9" height="11" fill="#fffff6" stroke="#808080"/><rect x="2.5" y="2.5" width="9" height="11" fill="#fffff6" stroke="#808080"/><rect x="4" y="4" width="2" height="1" fill="#0000ff"/><rect x="7" y="4" width="2" height="1" fill="#0000ff"/><rect x="4" y="5" width="1" height="1" fill="#0000ff"/><rect x="6" y="5" width="2" height="1" fill="#0000ff"/><rect x="9" y="5" width="1" height="1" fill="#0000ff"/><rect x="4" y="7" width="2" height="1" fill="#0000ff"/><rect x="7" y="7" width="2" height="1" fill="#0000ff"/><rect x="4" y="8" width="1" height="1" fill="#0000ff"/><rect x="6" y="8" width="2" height="1" fill="#0000ff"/><rect x="9" y="8" width="1" height="1" fill="#0000ff"/><rect x="4" y="10" width="2" height="1" fill="#0000ff"/><rect x="7" y="10" width="2" height="1" fill="#0000ff"/><rect x="4" y="11" width="1" height="1" fill="#0000ff"/><rect x="6" y="11" width="2" height="1" fill="#0000ff"/><rect x="9" y="11" width="1" height="1" fill="#0000ff"/><rect x="12" y="6" width="1" height="1" fill="#0000ff"/><rect x="13" y="7" width="1" height="1" fill="#0000ff"/><rect x="12" y="9" width="1" height="1" fill="#0000ff"/><rect x="13" y="10" width="1" height="1" fill="#0000ff"/><rect x="12" y="12" width="1" height="1" fill="#0000ff"/><rect x="13" y="13" width="1" height="1" fill="#0000ff"/></svg><svg class="abs" style="left:16px;top:115px;filter:blur(0.3px)" width="14" height="14" viewBox="0 0 14 14" shape-rendering="crispEdges"><polygon points="2,2 12,2 7.5,11" fill="#c0c0c0"/><rect x="3" y="2" width="9" height="1" fill="#555"/><rect x="2" y="2" width="1" height="2" fill="#000"/><rect x="3" y="4" width="1" height="2" fill="#000"/><rect x="4" y="6" width="1" height="2" fill="#000"/><rect x="5" y="8" width="1" height="2" fill="#000"/><rect x="6" y="10" width="2" height="1" fill="#000"/><rect x="10" y="4" width="1" height="1" fill="#8a8a8a"/><rect x="9" y="6" width="1" height="1" fill="#8a8a8a"/><rect x="8" y="8" width="1" height="1" fill="#8a8a8a"/></svg><svg class="abs" style="left:9px;top:9px;filter:blur(0.35px)" width="15" height="12" viewBox="0 0 15 12"><defs><linearGradient id="g1" x1="0" y1="0" x2="0.6" y2="1"><stop offset="0" stop-color="#5f84c4"/><stop offset="0.5" stop-color="#3f9a82"/><stop offset="1" stop-color="#45b04e"/></linearGradient><linearGradient id="g2" x1="0" y1="0" x2="0" y2="1"><stop offset="0" stop-color="#5f86cc"/><stop offset="1" stop-color="#8fd88a"/></linearGradient></defs><rect x="0" y="0" width="15" height="12" fill="#ebe4de"/><rect x="1" y="1" width="13" height="10" fill="#fbfbfb"/><rect x="2" y="2" width="5" height="8" fill="url(#g1)"/><rect x="9" y="2" width="2" height="8" fill="#e2e2e2"/><rect x="12" y="2" width="2" height="4.3" fill="url(#g2)"/></svg><div class="abs" style="left:1066px;top:15px;width:10px;height:1px;background:#fff"></div><div class="abs" style="left:1111px;top:10px;width:10px;height:10px;border:1px solid #fff"></div><svg class="abs" style="left:1156px;top:9px;" width="12" height="12" viewBox="0 0 12 12"><path d="M1.35 1.35 L10.65 10.65 M10.65 1.35 L1.35 10.65" stroke="#fff" stroke-width="1.05" fill="none"/></svg><svg class="abs" style="left:1171px;top:48px;" width="11" height="9" viewBox="0 0 11 9"><polygon points="5.5,0 11,5.5 11,9 5.5,4 0,9 0,5.5" fill="#606060"/></svg><svg class="abs" style="left:1171px;top:598px;" width="11" height="9" viewBox="0 0 11 9"><polygon points="5.5,9 11,3.5 11,0 5.5,5 0,0 0,3.5" fill="#606060"/></svg>
<div class="abs" id="cr1"></div><div class="abs" id="cr2"></div><div class="abs" id="bt"></div>
<div class="abs" id="bl"></div><div class="abs" id="br"></div><div class="abs" id="bb"></div>
</body></html>
